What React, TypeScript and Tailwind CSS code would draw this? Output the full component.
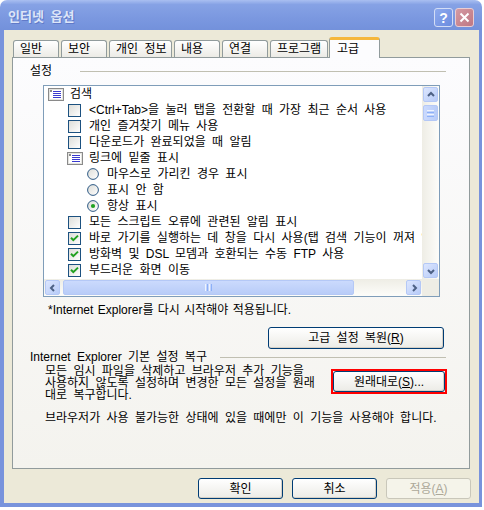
import React from 'react'

function GroupIcon() {
  return (
    <svg width="16" height="13" viewBox="0 0 16 13">
      <rect x="0.5" y="0.5" width="15" height="12" fill="#E4E4E0" stroke="#8A8A8A" />
      <rect x="2" y="2" width="12" height="9" fill="#FFFFFF" />
      <rect x="2" y="2" width="2" height="2" fill="#8A8A8A" />
      <path d="M5 3.5h8M5 5.5h8M5 7.5h8M5 9.5h8" stroke="#3A3ACF" strokeWidth="1" />
    </svg>
  )
}

function Check({ checked }: { checked?: boolean }) {
  return (
    <svg width="13" height="13" viewBox="0 0 13 13">
      <defs>
        <linearGradient id="cbg" x1="0" y1="0" x2="1" y2="1">
          <stop offset="0" stopColor="#DCDCD7" />
          <stop offset="1" stopColor="#FFFFFF" />
        </linearGradient>
      </defs>
      <rect x="0.5" y="0.5" width="12" height="12" fill="url(#cbg)" stroke="#1C5180" />
      {checked && <path d="M3 5.8l2.3 2.4L10 3.6" fill="none" stroke="#21A121" strokeWidth="2" />}
    </svg>
  )
}

function Radio({ selected }: { selected?: boolean }) {
  return (
    <svg width="12" height="12" viewBox="0 0 12 12">
      <defs>
        <linearGradient id="rbg" x1="0" y1="0" x2="1" y2="1">
          <stop offset="0" stopColor="#DCDCD7" />
          <stop offset="1" stopColor="#FFFFFF" />
        </linearGradient>
      </defs>
      <circle cx="6" cy="6" r="5.4" fill="url(#rbg)" stroke="#2E5A86" strokeWidth="1" />
      {selected && <circle cx="6" cy="6" r="2.1" fill="#21A121" />}
    </svg>
  )
}

function Arrow({ dir }: { dir: 'up' | 'down' | 'left' | 'right' }) {
  const d = {
    up: 'M1 5L4 2L7 5',
    down: 'M1 3L4 6L7 3',
    left: 'M5 1L2 4L5 7',
    right: 'M3 1L6 4L3 7',
  }[dir]
  return (
    <svg width="8" height="8" viewBox="0 0 8 8">
      <path d={d} fill="none" stroke="#4D6185" strokeWidth="2" />
    </svg>
  )
}

function ScrollBtn({ dir }: { dir: 'up' | 'down' | 'left' | 'right' }) {
  return (
    <div className="w-[17px] h-[17px] p-px shrink-0">
      <div className="w-full h-full rounded-[2px] border border-[#B4C8F6] bg-linear-to-br from-[#DCE6FE] to-[#B7CBF8] flex items-center justify-center">
        <Arrow dir={dir} />
      </div>
    </div>
  )
}

type Row =
  | { kind: 'group'; level: 0 | 1; text: string }
  | { kind: 'check'; checked?: boolean; text: string }
  | { kind: 'radio'; selected?: boolean; text: string }

const rows: Row[] = [
  { kind: 'group', level: 0, text: '검색' },
  { kind: 'check', text: '<Ctrl+Tab>을 눌러 탭을 전환할 때 가장 최근 순서 사용' },
  { kind: 'check', text: '개인 즐겨찾기 메뉴 사용' },
  { kind: 'check', text: '다운로드가 완료되었을 때 알림' },
  { kind: 'group', level: 1, text: '링크에 밑줄 표시' },
  { kind: 'radio', text: '마우스로 가리킨 경우 표시' },
  { kind: 'radio', text: '표시 안 함' },
  { kind: 'radio', selected: true, text: '항상 표시' },
  { kind: 'check', text: '모든 스크립트 오류에 관련된 알림 표시' },
  { kind: 'check', checked: true, text: '바로 가기를 실행하는 데 창을 다시 사용(탭 검색 기능이 꺼져 있는 경우)' },
  { kind: 'check', checked: true, text: '방화벽 및 DSL 모뎀과 호환되는 수동 FTP 사용' },
  { kind: 'check', checked: true, text: '부드러운 화면 이동' },
]

function ListRow({ row }: { row: Row }) {
  if (row.kind === 'group') {
    return (
      <div className={`flex items-center h-[16px] ${row.level === 0 ? 'pl-[4px]' : 'pl-[23px]'}`}>
        <div className="w-[22px] shrink-0 flex items-center">
          <GroupIcon />
        </div>
        <span>{row.text}</span>
      </div>
    )
  }
  if (row.kind === 'check') {
    return (
      <div className="flex items-center h-[16px] pl-[24px]">
        <div className="w-[21px] shrink-0 flex items-center">
          <Check checked={row.checked} />
        </div>
        <span>{row.text}</span>
      </div>
    )
  }
  return (
    <div className="flex items-center h-[16px] pl-[43px]">
      <div className="w-[20px] shrink-0 flex items-center">
        <Radio selected={row.selected} />
      </div>
      <span>{row.text}</span>
    </div>
  )
}

function XpButton({
  children,
  className = '',
  disabled,
}: {
  children: React.ReactNode
  className?: string
  disabled?: boolean
}) {
  if (disabled) {
    return (
      <div
        className={`h-[21px] rounded-[3px] border border-[#C9C7BA] bg-[#F5F4EA] text-[#ACA899] flex items-center justify-center ${className}`}
      >
        {children}
      </div>
    )
  }
  return (
    <div
      className={`h-[21px] rounded-[3px] border border-[#003C74] bg-linear-to-b from-[#FFFFFF] to-[#ECEBE6] shadow-[inset_-1px_-1px_0_#D6D0C5] text-black flex items-center justify-center ${className}`}
    >
      {children}
    </div>
  )
}

export default function App() {
  return (
    <div className="w-[484px] h-[510px] bg-white text-[12px] leading-[16px] text-black [word-spacing:3px] font-['Liberation_Sans','Noto_Sans_CJK_KR',sans-serif]">
      <div className="w-[482px] h-[507px] flex flex-col">
        {/* title bar */}
        <div className="h-[30px] shrink-0 rounded-t-[7px] bg-[linear-gradient(to_bottom,#A9BFF1_0%,#86A2E5_15%,#7B98E0_60%,#7391DB_100%)] flex justify-between">
          <div className="pl-[8px] pt-[9px] text-[13px] font-bold text-[#DCE5F8] [text-shadow:1px_1px_0_#6079C8]">
            인터넷 옵션
          </div>
          <div className="flex gap-[2px] pr-[8px] pt-[8px]">
            <div className="w-[19px] h-[19px] rounded-[3px] border border-[#D3DDF6] bg-linear-to-br from-[#8EAAEE] to-[#6C8CDF] flex items-center justify-center text-white font-bold text-[14px] leading-none">
              ?
            </div>
            <div className="w-[19px] h-[19px] rounded-[3px] border border-[#EACDD2] bg-linear-to-br from-[#D49AA3] to-[#BF7783] flex items-center justify-center">
              <svg width="11" height="11" viewBox="0 0 11 11">
                <path d="M1.5 1.5L9.5 9.5M9.5 1.5L1.5 9.5" stroke="#FFFFFF" strokeWidth="2" />
              </svg>
            </div>
          </div>
        </div>

        {/* body */}
        <div className="flex-1 bg-[#ECE9D8] border-l-[4px] border-r-[3px] border-b-[4px] border-[#7893DC] flex flex-col">
          {/* tabs */}
          <div className="mt-[7px] h-[20px] pl-[9px] flex items-end gap-[2px]">
            {[
              ['일반', 'w-[46px]'],
              ['보안', 'w-[46px]'],
              ['개인 정보', 'w-[63px]'],
              ['내용', 'w-[46px]'],
              ['연결', 'w-[46px]'],
              ['프로그램', 'w-[58px]'],
            ].map(([label, w]) => (
              <div
                key={label}
                className={`${w} h-[17px] rounded-t-[3px] border border-b-0 border-[#919B9C] bg-linear-to-b from-[#FFFFFF] to-[#ECEBE6] pl-[6px] flex items-center whitespace-nowrap`}
              >
                {label}
              </div>
            ))}
            <div className="relative z-10 -ml-px -mb-px w-[51px] h-[21px] rounded-t-[3px] border-x border-[#919B9C] border-t-[3px] border-t-[#F5B73C] bg-[#FCFCFE] pl-[7px] flex items-center">
              고급
            </div>
          </div>

          {/* panel */}
          <div className="ml-[8px] w-[458px] h-[412px] shrink-0 border border-[#919B9C] bg-linear-to-b from-[#FCFCFE] to-[#F4F3EE] flex flex-col">
            <div className="mt-[5px] h-[16px] pl-[17px] pr-[23px] flex items-center">
              <span className="w-[50px] shrink-0">설정</span>
              <div className="flex-1 h-px bg-[#C0BFB1]" />
            </div>

            {/* list box */}
            <div className="mt-[6px] ml-[30px] w-[397px] h-[212px] shrink-0 border border-[#7F9DB9] bg-white flex flex-col">
              <div className="flex h-[193px]">
                <div className="w-[378px] h-[193px] overflow-hidden whitespace-nowrap">
                  {rows.map((r, i) => (
                    <ListRow key={i} row={r} />
                  ))}
                </div>
                <div className="w-[17px] h-[193px] flex flex-col bg-linear-to-r from-[#EEEDE5] to-[#FDFDFA]">
                  <ScrollBtn dir="up" />
                  <div className="h-[19px] p-px pt-[2px]">
                    <div className="w-full h-full rounded-[2px] border border-[#B4C8F6] bg-linear-to-r from-[#CBDAFD] to-[#B8CCF8] flex flex-col items-center justify-center gap-px">
                      <div className="w-[7px] h-px bg-[#EEF4FE]" />
                      <div className="w-[7px] h-px bg-[#8CB0F8]" />
                      <div className="w-[7px] h-px bg-[#EEF4FE]" />
                      <div className="w-[7px] h-px bg-[#8CB0F8]" />
                    </div>
                  </div>
                  <div className="flex-1" />
                  <ScrollBtn dir="down" />
                </div>
              </div>
              <div className="flex h-[17px]">
                <div className="w-[378px] h-[17px] flex bg-linear-to-b from-[#EEEDE5] to-[#FDFDFA]">
                  <ScrollBtn dir="left" />
                  <div className="w-[294px] h-[17px] p-px pl-[2px]">
                    <div className="w-full h-full rounded-[2px] border border-[#B4C8F6] bg-linear-to-b from-[#CBDAFD] to-[#B8CCF8] flex items-center justify-center gap-px">
                      <div className="h-[7px] w-px bg-[#EEF4FE]" />
                      <div className="h-[7px] w-px bg-[#8CB0F8]" />
                      <div className="h-[7px] w-px bg-[#EEF4FE]" />
                      <div className="h-[7px] w-px bg-[#8CB0F8]" />
                    </div>
                  </div>
                  <div className="flex-1" />
                  <ScrollBtn dir="right" />
                </div>
                <div className="w-[17px] h-[17px] bg-[#EEEDE5]" />
              </div>
            </div>

            <div className="mt-[5px] ml-[35px] h-[16px] [word-spacing:1px]">
              *Internet Explorer를 다시 시작해야 적용됩니다.
            </div>

            <div className="mt-[9px] ml-[255px]">
              <XpButton className="w-[176px] h-[22px]">
                <span>
                  고급 설정 복원(<span className="underline">R</span>)
                </span>
              </XpButton>
            </div>

            <div className="h-[16px] pl-[17px] pr-[23px] flex items-center">
              <span className="w-[190px] shrink-0 whitespace-nowrap">Internet Explorer 기본 설정 복구</span>
              <div className="flex-1 h-px bg-[#C0BFB1]" />
            </div>

            <div className="mt-[4px] pl-[32px] flex items-start">
              <div className="w-[286px] -mt-[4px] leading-[12px] whitespace-nowrap">
                <div>모든 임시 파일을 삭제하고 브라우저 추가 기능을</div>
                <div>사용하지 않도록 설정하며 변경한 모든 설정을 원래</div>
                <div>대로 복구합니다.</div>
              </div>
              <div className="w-[116px] h-[25px] border-2 border-[#FF0000]">
                <XpButton className="w-full h-full">
                  <span>
                    원래대로(<span className="underline">S</span>)...
                  </span>
                </XpButton>
              </div>
            </div>

            <div className="mt-[9px] ml-[32px] h-[16px] whitespace-nowrap">
              브라우저가 사용 불가능한 상태에 있을 때에만 이 기능을 사용해야 합니다.
            </div>
          </div>

          {/* bottom buttons */}
          <div className="mt-[9px] pr-[8px] flex justify-end gap-[9px]">
            <XpButton className="w-[85px]">확인</XpButton>
            <XpButton className="w-[85px]">취소</XpButton>
            <XpButton className="w-[85px]" disabled>
              <span>
                적용(<span className="underline">A</span>)
              </span>
            </XpButton>
          </div>
        </div>
      </div>
    </div>
  )
}
